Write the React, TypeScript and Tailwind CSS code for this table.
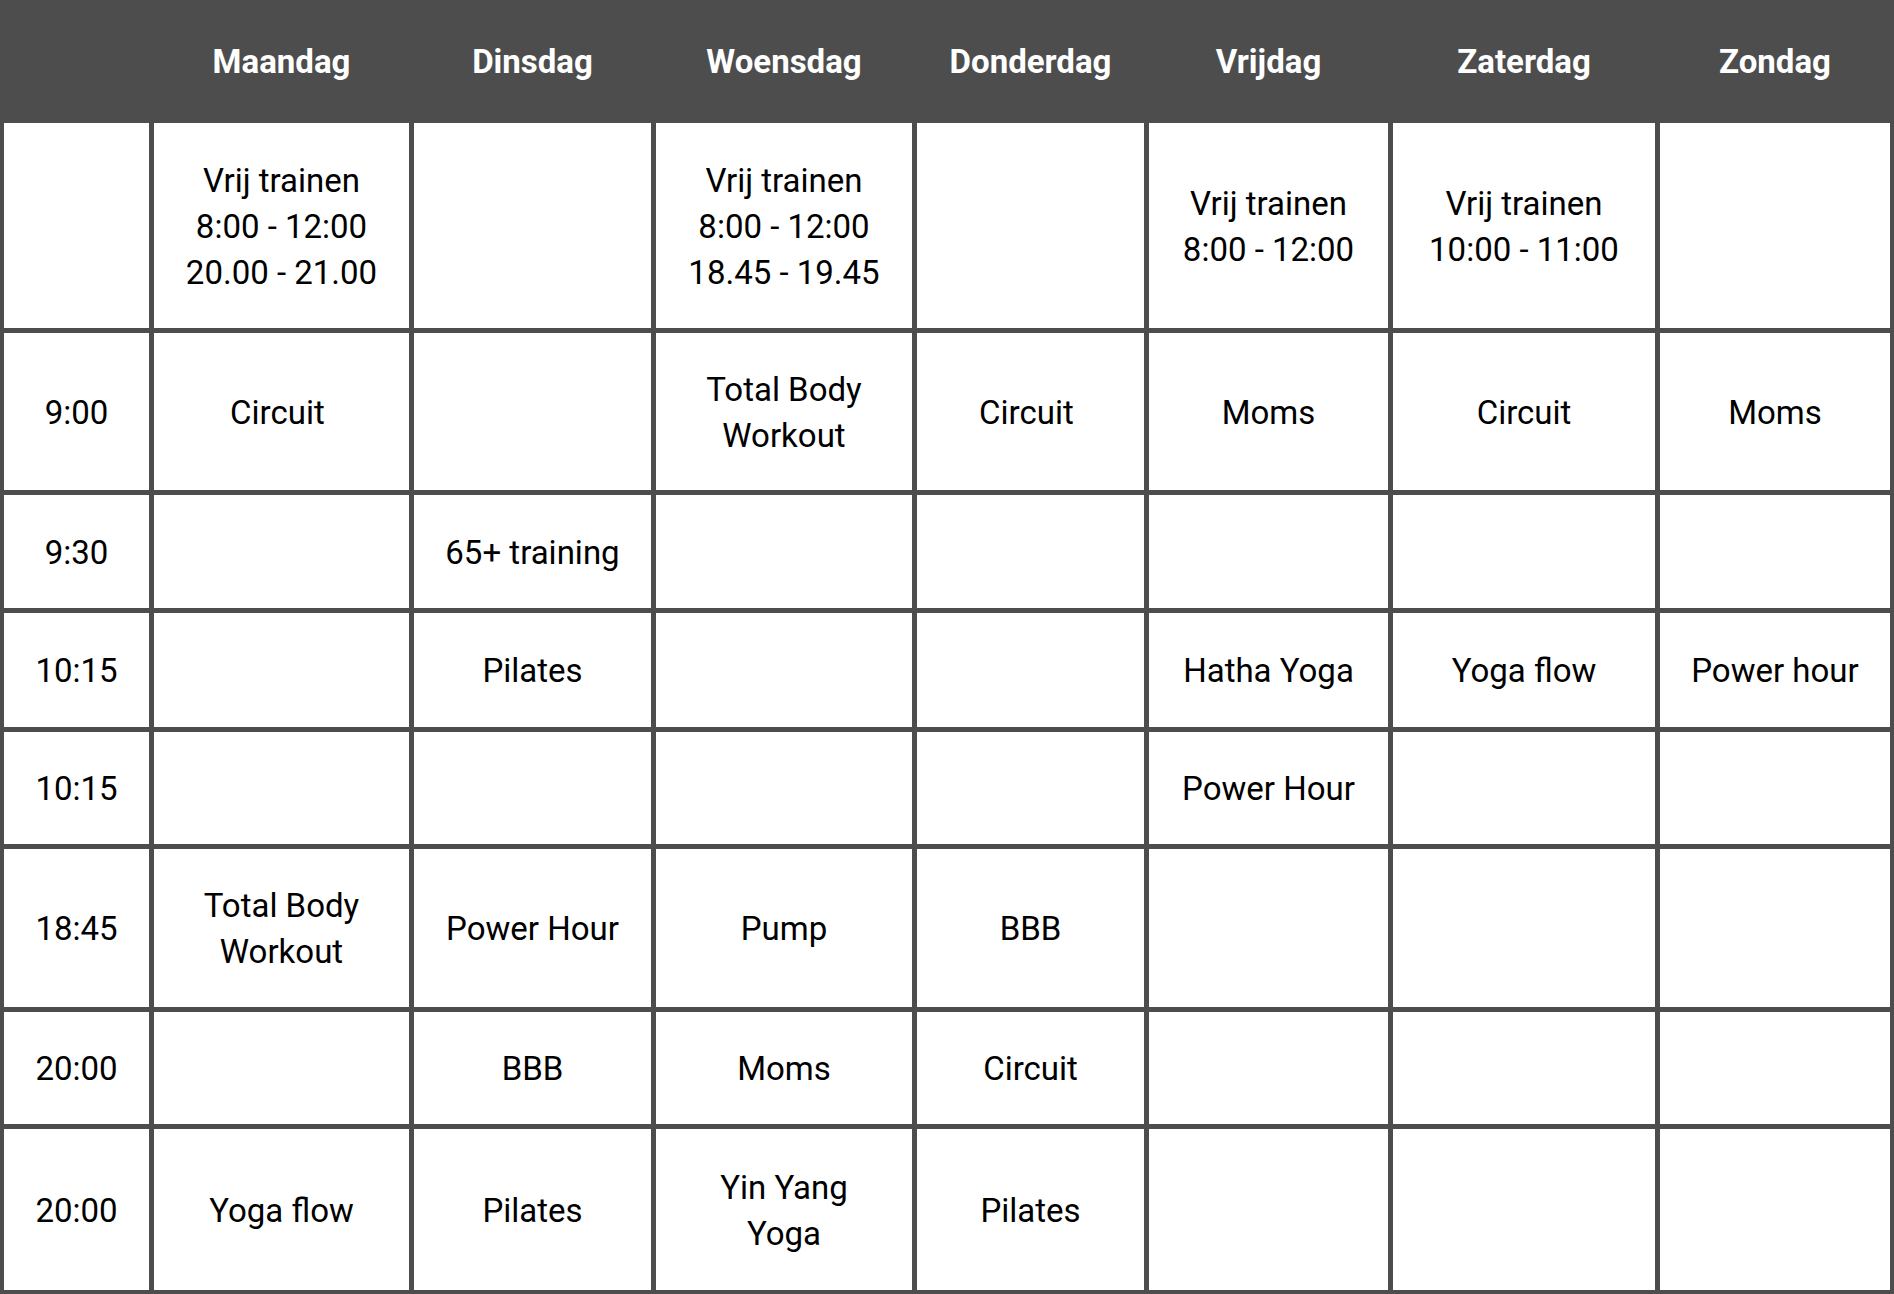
import React from "react";

const days = ["Maandag", "Dinsdag", "Woensdag", "Donderdag", "Vrijdag", "Zaterdag", "Zondag"];

const rows: { h: string; time: string; cells: string[][] }[] = [
  {
    h: "h-[205px]",
    time: "",
    cells: [
      ["Vrij trainen", "8:00 - 12:00", "20.00 - 21.00"],
      [],
      ["Vrij trainen", "8:00 - 12:00", "18.45 - 19.45"],
      [],
      ["Vrij trainen", "8:00 - 12:00"],
      ["Vrij trainen", "10:00 - 11:00"],
      [],
    ],
  },
  {
    h: "h-[157px]",
    time: "9:00",
    cells: [["Circuit\u00a0"], [], ["Total Body", "Workout"], ["Circuit\u00a0"], ["Moms"], ["Circuit"], ["Moms"]],
  },
  {
    h: "h-[113px]",
    time: "9:30",
    cells: [[], ["65+ training"], [], [], [], [], []],
  },
  {
    h: "h-[114px]",
    time: "10:15",
    cells: [[], ["Pilates"], [], [], ["Hatha Yoga"], ["Yoga flow"], ["Power hour"]],
  },
  {
    h: "h-[112px]",
    time: "10:15",
    cells: [[], [], [], [], ["Power Hour"], [], []],
  },
  {
    h: "h-[158px]",
    time: "18:45",
    cells: [["Total Body", "Workout"], ["Power Hour"], ["Pump"], ["BBB"], [], [], []],
  },
  {
    h: "h-[112px]",
    time: "20:00",
    cells: [[], ["BBB"], ["Moms"], ["Circuit"], [], [], []],
  },
  {
    h: "h-[161px]",
    time: "20:00",
    cells: [["Yoga flow"], ["Pilates"], ["Yin Yang", "Yoga"], ["Pilates"], [], [], []],
  },
];

const cols = "grid grid-cols-[145px_255px_237px_256px_227px_239px_262px_230px] gap-x-[5px]";

export default function App() {
  return (
    <div
      className="w-[1894px] h-[1294px] bg-[#4d4d4d] px-[4px] pb-[4px] overflow-hidden"
      style={{ fontFamily: "Roboto, 'Noto Sans', sans-serif" }}
    >
      <div className={`${cols} h-[123px] items-center`}>
        <div />
        {days.map((d) => (
          <div key={d} className="text-center text-white font-bold text-[33px] leading-none">
            {d}
          </div>
        ))}
      </div>
      <div className="flex flex-col gap-y-[5px]">
        {rows.map((r, i) => (
          <div key={i} className={`${cols} ${r.h}`}>
            <div className="bg-white flex items-center justify-center pt-[2px] text-[33px] leading-[46px] text-black">
              {r.time}
            </div>
            {r.cells.map((c, j) => (
              <div
                key={j}
                className="bg-white flex flex-col items-center justify-center pt-[2px] text-center text-[33px] leading-[46px] text-black whitespace-pre"
              >
                {c.map((line, k) => (
                  <div key={k}>{line}</div>
                ))}
              </div>
            ))}
          </div>
        ))}
      </div>
    </div>
  );
}
